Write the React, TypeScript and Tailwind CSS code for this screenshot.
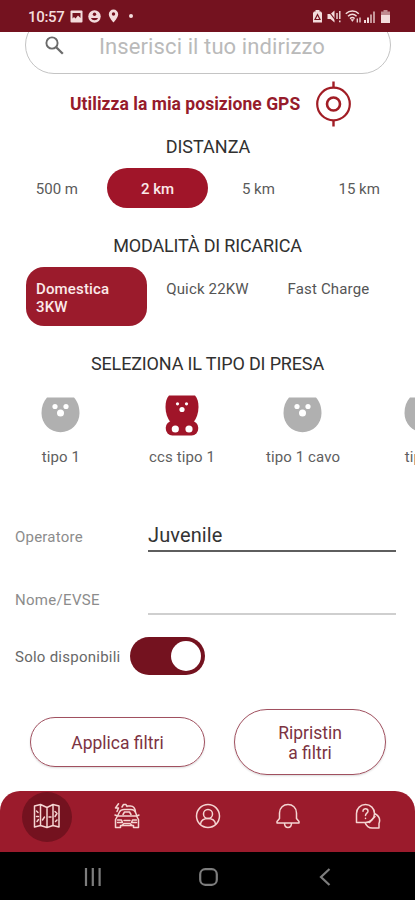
import React from "react";
import clsx from "clsx";

const distances = ["500 m", "2 km", "5 km", "15 km"]
const modes = ["Domestica 3KW", "Quick 22KW", "Fast Charge"]
const sockets = ["tipo 1", "ccs tipo 1", "tipo 1 cavo", "tipo 2"]

const StatusBar = () => (
  <div className="relative z-10 flex h-8 shrink-0 items-center justify-between bg-[#74121f] pl-[28px] pr-[25px] text-[#f3dcdc]">
    <div className="flex items-center">
      <span className="w-[42px] whitespace-nowrap pt-[2px] text-[15px] font-medium tracking-[-0.3px]">10:57</span>
      <svg width="13" height="13" viewBox="0 0 13 13" fill="none">
        <rect x="0.5" y="0.5" width="12" height="12" rx="1" fill="currentColor" />
        <path d="M2.500 3h8v5l-2.500-2.500-2.500 3-1.500-1.500-1.500 1.500z" fill="#74121f" />
      </svg>
      <svg className="ml-[5px]" width="13" height="13" viewBox="0 0 13 13">
        <circle cx="6.500" cy="6.500" r="6.200" fill="currentColor" />
        <circle cx="6.500" cy="4.300" r="1.700" fill="#74121f" />
        <path d="M3 8h7c-1 3-6 3-7 0z" fill="#74121f" />
      </svg>
      <svg className="ml-[7px]" width="11" height="14" viewBox="0 0 11 14">
        <path d="M5.500 0.500a4.700 4.700 0 0 1 4.700 4.700c0 3.300-4.700 8.300-4.700 8.300S.8 8.500.8 5.200A4.700 4.700 0 0 1 5.500.5z" fill="currentColor" />
        <circle cx="5.500" cy="5" r="1.700" fill="#74121f" />
      </svg>
      <span className="ml-[10px] size-[4px] rounded-full bg-current" />
    </div>
    <div className="flex items-center">
      <svg width="9" height="13" viewBox="0 0 9 13">
        <path d="M2.500 0h4v1.500H8L9 3v9.500H0V3l1-1.500h1.500z" fill="currentColor" />
        <path d="M4.500 4.500 7 9.500H2z" fill="none" stroke="#74121f" strokeWidth="1.200" />
      </svg>
      <svg className="ml-[5px]" width="14" height="13" viewBox="0 0 14 13">
        <path d="M0.500 4h3l4-3.500v12L3.500 9h-3z" fill="currentColor" />
        <path d="M1.500 1l8 10.500" stroke="#74121f" strokeWidth="1.200" />
        <path d="M10 3v6M12.800 1v8M12.800 10.500v1.700" stroke="currentColor" strokeWidth="1.400" />
      </svg>
      <svg className="ml-[4px]" width="17" height="13" viewBox="0 0 17 13" fill="none" stroke="currentColor" strokeWidth="1.500">
        <path d="M.8 3.800c3.800-3.600 9.500-3.600 13 0M3 6.300c2.700-2.500 6-2.500 8.600 0M5 8.600c1.500-1.300 3.200-1.300 4.600 0" />
        <path d="M6 9.500h2.800l-1.400 2z" fill="currentColor" strokeWidth="0.500" />
        <path d="M12.300 12.500V8.500M15 7.500v5" strokeWidth="1.300" />
      </svg>
      <svg className="ml-[2px]" width="12" height="13" viewBox="0 0 12 13" fill="currentColor">
        <path d="M0 10h2v3H0zM3 7.500h2V13H3z" />
        <path d="M6 4.500h2V13H6zM9 1.500h2V13H9z" opacity=".65" />
      </svg>
      <svg className="ml-[5px]" width="9" height="13" viewBox="0 0 9 13" fill="currentColor">
        <path d="M2.500 0h4v1.500H9V5H0V1.500h2.500z" opacity=".6" />
        <path d="M0 5h9v8H0z" />
      </svg>
    </div>
  </div>
)

const Socket = () => (
  <svg width="39" height="36" viewBox="0 0 39 36">
    <path d="M6 .5h27C36.500 4.500 38.500 9.500 38.500 16.300a19 19 0 0 1-38 0C.5 9.500 2.500 4.500 6 .5z" fill="#b0b0b0" />
    <circle cx="14" cy="9.500" r="2.600" fill="#fff" />
    <circle cx="25" cy="9.500" r="2.600" fill="#fff" />
    <circle cx="19.500" cy="16" r="3.500" fill="#fff" />
  </svg>
)

const ComboSocket = () => (
  <svg width="34" height="41" viewBox="0 0 34 41" fill="#a01529">
    <path d="M4 .5h26C32.500 3.500 33.500 7 33.500 12c0 6.500-2 11-4.800 15H5.300C2.500 23 .5 18.500.5 12 .5 7 1.500 3.500 4 .5z" />
    <rect x="0.800" y="26" width="32.400" height="14.500" rx="6.500" />
    <g fill="#fff">
      <circle cx="12.500" cy="8.800" r="1.600" />
      <circle cx="21.500" cy="8.800" r="1.600" />
      <circle cx="17" cy="14.500" r="2.600" />
      <circle cx="10.300" cy="34" r="3.600" />
      <circle cx="24" cy="34" r="3.600" />
    </g>
  </svg>
)

const NavIcon = ({ active, children }: { active?: boolean, children: React.ReactNode }) => (
  <div className={clsx("flex size-[50px] items-center justify-center rounded-full", active && "bg-[#74121f]")}>
    <svg width="28" height="28" viewBox="0 0 28 28" fill="none" stroke="#f5d5d2" strokeWidth="1.500" strokeLinejoin="round" strokeLinecap="round">
      {children}
    </svg>
  </div>
)

const BottomNav = () => (
  <div className="flex h-[61px] shrink-0 justify-between rounded-t-[20px] bg-[#9b1b2c] px-[22px] pt-px">
    <NavIcon active>
      <path d="M1.500 3 7.500 1.500l6.500 3 6-3L26 3v21l-6-1.500-6 2-6.500-2-6 1.500zM7.500 1.500v21M14 4.500v20M20 1.500v21" />
      <path d="M3.500 8 5 9.500M3.500 13.500h2M4 18.500l1.500-2M9.500 17l2-3M16 14h2M22 8.500l2 2-2 3M22.500 18.500l1.500-1.500" />
    </NavIcon>
    <NavIcon>
      <path d="M4.500 13 6.500 9C7.500 7.200 9 6.500 11 6.500h7c2.200 0 3.500.7 4.300 2.500l1.700 4M2 12l2.500 1h19.500l2-1M2.500 24.500V16.500l2-3.500h19l2 3.500v8h-5v-2H7.500v2z" />
      <path d="M4.500 17h4l1 2.500h-5M23.500 17h-4l-1 2.500h5M11 17.500h6M9 22.500l2-2h6l2 2M10 11.500l1.500-2.500h5l1.500 2.500" />
      <path d="M5.500.8 2.500 5h3L4 8.500M9 4l1.500-2.500h2.500l1 2M13.500 3h4c3 0 4.500 1.500 5 6" />
    </NavIcon>
    <NavIcon>
      <circle cx="14" cy="13" r="11.500" />
      <circle cx="14" cy="11" r="4.500" />
      <path d="M6.500 21c.5-3.500 3-5.500 7.500-5.500s7 2 7.500 5.500" />
    </NavIcon>
    <NavIcon>
      <path d="M3 20v-1.500l2.500-3V10C5.500 4.500 9.500 1.500 14 1.500s8.500 3 8.500 8.500v5.500l2.500 3V20zM10.500 20c0 6 7 6 7 0" />
    </NavIcon>
    <NavIcon>
      <path d="M2.500 19.500V10.500a9 9 0 1 1 9 9zM20.500 10.500c5 2.500 6 6 4.500 10V25h-5.500c-4 .5-7-1.500-8.500-5.500" />
      <path d="M9 8.200c0-3.400 5-3.200 5 0 0 2-2.500 2-2.500 4.300M11.500 15.200v.3M15.500 19.500l5.500-6" />
    </NavIcon>
  </div>
)

const Title = ({ className, children }: { className?: string, children: React.ReactNode }) => (
  <h2 className={clsx("text-center text-[18px] leading-6 text-[#303030]", className)}>{children}</h2>
)

const App = () => {
  return (
    <div className="flex h-[900px] w-[415px] flex-col overflow-hidden bg-white font-['Roboto',sans-serif]">
      <StatusBar />

      <div className="flex h-[759px] w-full shrink-0 flex-col">
        <div className="ml-[25px] mt-[-16px] flex h-[58px] w-[366px] shrink-0 items-center rounded-full border border-[#c4c4c4] pl-[19px]">
          <svg width="19" height="19" viewBox="0 0 19 19" fill="none" stroke="#6b6b6b" strokeWidth="1.900">
            <circle cx="7" cy="7" r="5.600" />
            <path d="m11.200 11.200 6.600 6.600" strokeWidth="2.300" />
          </svg>
          <span className="ml-[35px] mt-[3px] whitespace-nowrap text-[22px] tracking-[0.1px] text-[#bababa]">Inserisci il tuo indirizzo</span>
        </div>

        <div className="flex h-[60px] shrink-0 items-center pl-[70px]">
          <span className="w-[231px] whitespace-nowrap pt-px text-[17.500px] font-bold tracking-[0.04px] text-[#961b2b]">Utilizza la mia posizione GPS</span>
          <svg className="ml-[14px]" width="37" height="46" viewBox="0 0 37 46" fill="none" stroke="#a11d25">
            <circle cx="18.500" cy="23" r="16.300" strokeWidth="2.200" />
            <circle cx="18.500" cy="23" r="6.500" strokeWidth="2.600" />
            <path d="M18.500.5V7M18.500 39v6.500" strokeWidth="2.400" />
          </svg>
        </div>

        <Title className="mt-[1px] pl-[1px]">DISTANZA</Title>
        <div className="mx-[6px] mt-[9px] grid h-10 shrink-0 grid-cols-4 text-[15px] text-[#5a5a5a]">
          {distances.map((item, index) => (
            <div key={item} className={clsx("flex items-center justify-center rounded-full pl-px pt-[2px]", index === 1 && "bg-[#a01529] font-medium text-[#fbe9e9]")}>
              {item}
            </div>
          ))}
        </div>

        <Title className="mt-[26px] tracking-[-0.18px]">MODALITÀ DI RICARICA</Title>
        <div className="ml-[26px] mt-[9px] grid h-[59px] w-[363px] shrink-0 grid-cols-3 text-[15px] leading-[18px] tracking-[0.16px] text-[#555]">
          {modes.map((item, index) => (
            <div key={item} className={clsx("pt-[13px]", index === 0 ? "rounded-[18px] bg-[#9b1b2c] px-[10px] font-medium text-[#fbe9e9]" : "text-center")}>
              {item}
            </div>
          ))}
        </div>

        <Title className="mt-[26px] tracking-[-0.15px]">SELEZIONA IL TIPO DI PRESA</Title>
        <div className="mt-[17px] grid h-[78px] w-[484px] shrink-0 grid-cols-4 text-[15px] text-[#606060]">
          {sockets.map((item, index) => (
            <div key={item} className="flex flex-col items-center">
              <div className="flex h-[44px] items-center">
                {index === 1 ? <ComboSocket /> : <Socket />}
              </div>
              <span className="mt-[10px] pl-px leading-5 tracking-[0.1px]">{item}</span>
            </div>
          ))}
        </div>

        <div className="mt-[48px] flex h-[33px] shrink-0 pl-[15px] text-[15px] text-[#8c8c8c]">
          <span className="w-[133px] pt-[7px] tracking-[0.22px]">Operatore</span>
          <div className="w-[248px] border-b-2 border-[#5e5e5e] text-[20px] leading-8 tracking-[0.1px] text-[#333]">Juvenile</div>
        </div>
        <div className="mt-[30px] flex h-[33px] shrink-0 pl-[15px] text-[15px] text-[#8c8c8c]">
          <span className="w-[133px] pt-[7px] tracking-[0.3px]">Nome/EVSE</span>
          <div className="w-[248px] border-b-2 border-[#cfcfcf]" />
        </div>

        <div className="mt-[22px] flex h-[38px] shrink-0 items-center pl-[15px]">
          <span className="w-[115px] whitespace-nowrap pt-[2px] text-[15px] tracking-[0.25px] text-[#686868]">Solo disponibili</span>
          <div className="flex h-[38px] w-[75px] items-center justify-end rounded-full bg-[#74121f] pr-[4px]">
            <div className="size-[30px] rounded-full bg-white" />
          </div>
        </div>

        <div className="ml-[30px] mt-[34px] flex shrink-0 items-center text-center text-[17.500px] leading-5 text-[#7c3342]">
          <button className="h-[50px] w-[175px] rounded-full border border-[#a0505f] pt-[2px] shadow-[0_1px_2px_rgba(0,0,0,0.15)]">Applica filtri</button>
          <button className="ml-[29px] h-[66px] w-[152px] rounded-full border border-[#a0505f] pt-[2px] shadow-[0_1px_2px_rgba(0,0,0,0.15)]">Ripristin<br />a filtri</button>
        </div>
      </div>

      <BottomNav />

      <div className="flex h-12 shrink-0 items-center bg-black pl-[84px] pt-[2px]">
        <svg width="18" height="18" viewBox="0 0 18 18" stroke="#7d7d7d" strokeWidth="2.200">
          <path d="M2 0v18M8.800 0v18M15.600 0v18" />
        </svg>
        <svg className="ml-[97px]" width="19" height="18" viewBox="0 0 19 18" fill="none" stroke="#7d7d7d" strokeWidth="2.200">
          <rect x="1.200" y="1.200" width="16.600" height="15.600" rx="5" />
        </svg>
        <svg className="ml-[101px]" width="12" height="18" viewBox="0 0 12 18" fill="none" stroke="#7d7d7d" strokeWidth="2.200">
          <path d="M10.500 1 2 9l8.500 8" />
        </svg>
      </div>
    </div>
  );
};

export default App;
